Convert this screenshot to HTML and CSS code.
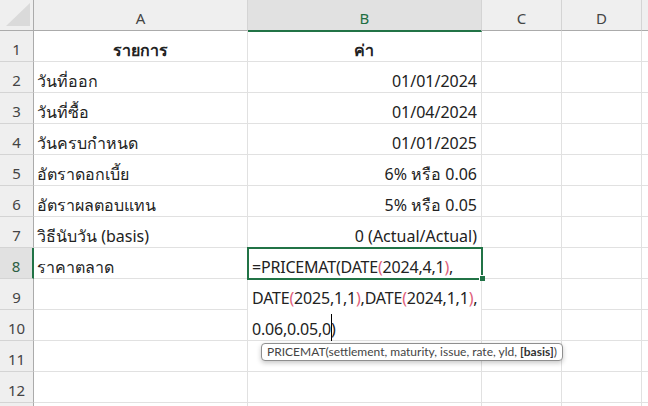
FILE: index.html
```html
<!DOCTYPE html>
<html>
    <head>
        <meta charset="utf-8">
        <link rel="stylesheet" href="styles.css">
    </head>
    <body>
        <div class="sheet">
            <div class="corner"><svg width="24" height="23" viewBox="0 0 24 23"><polygon points="24,0 24,23 0,23" fill="#dadada"/></svg></div>
            <div class="colhdr">A</div>
            <div class="colhdr active">B</div>
            <div class="colhdr">C</div>
            <div class="colhdr">D</div>
            <div class="colhdr"></div>

            <div class="rowhdr">1</div>
            <div class="cell center bold">รายการ</div>
            <div class="cell center bold">ค่า</div>
            <div class="cell"></div><div class="cell"></div><div class="cell"></div>

            <div class="rowhdr">2</div>
            <div class="cell">วันที่ออก</div>
            <div class="cell right">01/01/2024</div>
            <div class="cell"></div><div class="cell"></div><div class="cell"></div>

            <div class="rowhdr">3</div>
            <div class="cell">วันที่ซื้อ</div>
            <div class="cell right">01/04/2024</div>
            <div class="cell"></div><div class="cell"></div><div class="cell"></div>

            <div class="rowhdr">4</div>
            <div class="cell">วันครบกำหนด</div>
            <div class="cell right">01/01/2025</div>
            <div class="cell"></div><div class="cell"></div><div class="cell"></div>

            <div class="rowhdr">5</div>
            <div class="cell">อัตราดอกเบี้ย</div>
            <div class="cell right">6% หรือ 0.06</div>
            <div class="cell"></div><div class="cell"></div><div class="cell"></div>

            <div class="rowhdr">6</div>
            <div class="cell">อัตราผลตอบแทน</div>
            <div class="cell right">5% หรือ 0.05</div>
            <div class="cell"></div><div class="cell"></div><div class="cell"></div>

            <div class="rowhdr">7</div>
            <div class="cell">วิธีนับวัน (basis)</div>
            <div class="cell right">0 (Actual/Actual)</div>
            <div class="cell"></div><div class="cell"></div><div class="cell"></div>

            <div class="rowhdr active">8</div>
            <div class="cell">ราคาตลาด</div>
            <div class="editor">
                <div class="selection"></div>
                <div class="handle"></div>
                <div class="line">=PRICEMAT(DATE<span class="p2">(</span>2024,4,1<span class="p2">)</span>,</div>
                <div class="line">DATE<span class="p2">(</span>2025,1,1<span class="p2">)</span>,DATE<span class="p2">(</span>2024,1,1<span class="p2">)</span>,</div>
                <div class="line">0.06,0.05,0<span class="caret"></span>)</div>
                <div class="tip">PRICEMAT(settlement, maturity, issue, rate, yld, <b>[basis]</b>)</div>
            </div>
            <div class="cell"></div><div class="cell"></div><div class="cell"></div>

            <div class="rowhdr">9</div>
            <div class="cell"></div>
            <div class="cell"></div><div class="cell"></div><div class="cell"></div>

            <div class="rowhdr">10</div>
            <div class="cell"></div>
            <div class="cell"></div><div class="cell"></div><div class="cell"></div>

            <div class="rowhdr">11</div>
            <div class="cell"></div><div class="cell"></div>
            <div class="cell"></div><div class="cell"></div><div class="cell"></div>

            <div class="rowhdr">12</div>
            <div class="cell"></div><div class="cell"></div>
            <div class="cell"></div><div class="cell"></div><div class="cell"></div>

            <div class="rowhdr"></div>
            <div class="cell"></div><div class="cell"></div>
            <div class="cell"></div><div class="cell"></div><div class="cell"></div>
        </div>
    </body>
</html>
```

FILE: styles.css
```css
body {
    margin: 0;
    background: #fff;
    overflow: hidden;
}
.sheet {
    display: grid;
    grid-template-columns: 34px 214px 234px 80px 80px 1fr;
    grid-template-rows: 31px repeat(12, 31px) 1fr;
    width: 648px;
    height: 406px;
    font-family: "Noto Sans", "Open Sans", sans-serif;
    font-size: 16px;
    color: #222;
}
.corner {
    background: #efefef;
    border-right: 1px solid #ababab;
    border-bottom: 1px solid #ababab;
    display: flex;
    align-items: flex-end;
    justify-content: flex-end;
    padding: 0 3px 4px 0;
    box-sizing: border-box;
}
.corner svg {
    display: block;
}
.colhdr {
    background: #efefef;
    border-right: 1px solid #d4d4d4;
    border-bottom: 1px solid #ababab;
    display: flex;
    align-items: center;
    justify-content: center;
    font-size: 15px;
    color: #444;
    padding-top: 5px;
    box-sizing: border-box;
}
.colhdr.active {
    background: #e1e1e1;
    color: #1e6e42;
    border-bottom: 2px solid #217346;
    margin-bottom: -1px;
    position: relative;
    z-index: 1;
}
.rowhdr {
    background: #efefef;
    border-right: 1px solid #ababab;
    border-bottom: 1px solid #d4d4d4;
    display: flex;
    align-items: center;
    justify-content: center;
    font-size: 15px;
    color: #444;
    padding-top: 5px;
    box-sizing: border-box;
}
.rowhdr.active {
    background: #e1e1e1;
    color: #2d5e43;
    border-right: 2px solid #217346;
}
.cell {
    border-right: 1px solid #e1e1e1;
    border-bottom: 1px solid #e1e1e1;
    display: flex;
    align-items: flex-end;
    line-height: 20px;
    padding: 0 4px 1px 3px;
    white-space: nowrap;
    overflow: hidden;
    box-sizing: border-box;
}
.center {
    justify-content: center;
}
.right {
    justify-content: flex-end;
}
.bold {
    font-weight: bold;
}
.editor {
    grid-row: span 3;
    position: relative;
    background: #fff;
    border-right: 1px solid #e1e1e1;
    border-bottom: 1px solid #e1e1e1;
    padding: 4px 0 0 4px;
    box-sizing: border-box;
    letter-spacing: -0.2px;
}
.line {
    line-height: 31px;
    height: 31px;
    white-space: nowrap;
}
.p2 {
    color: #e0607a;
}
.caret {
    display: inline-block;
    width: 1px;
    height: 27px;
    background: #000;
    vertical-align: -6px;
    margin-right: -1px;
}
.selection {
    position: absolute;
    left: -1px;
    top: -1px;
    width: 236px;
    height: 33px;
    border: 2px solid #217346;
    box-sizing: border-box;
}
.handle {
    position: absolute;
    left: 231px;
    top: 27px;
    width: 5px;
    height: 5px;
    background: #217346;
    border-left: 1px solid #fff;
    border-top: 1px solid #fff;
}
.tip {
    position: absolute;
    left: 13px;
    top: 95px;
    z-index: 2;
    height: 18px;
    line-height: 16px;
    padding: 0 5px 0 5px;
    border: 1px solid #8f8f8f;
    border-radius: 4px;
    background: #fff;
    box-shadow: 0 2px 5px rgba(0, 0, 0, 0.22);
    font-family: Lato, "Noto Sans", sans-serif;
    font-size: 12px;
    letter-spacing: 0;
    color: #444;
    white-space: nowrap;
    box-sizing: border-box;
}
.tip b {
    color: #333;
}
```
